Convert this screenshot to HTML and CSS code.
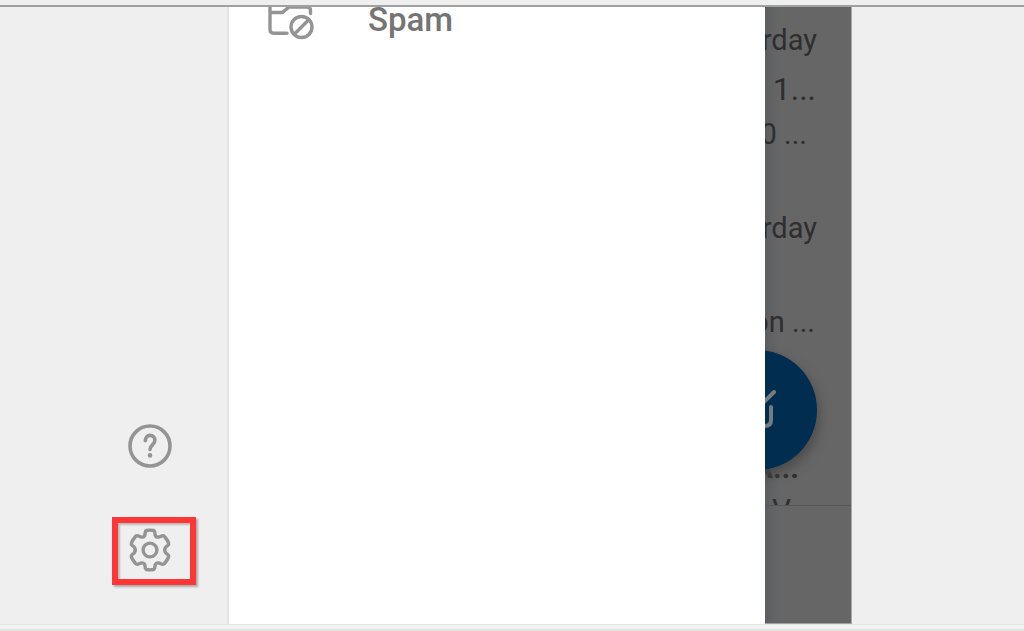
FILE: index.html
```html
<!DOCTYPE html>
<html lang="en">
<head>
<meta charset="utf-8">
<title>Mail</title>
<link rel="stylesheet" href="styles.css">
</head>
<body>
<div class="top-strip"></div>
<div class="screen">
  <nav class="rail" aria-label="Tools">
    <button class="rail-button" type="button" aria-label="Help">
      <svg width="48" height="48" viewBox="0 0 48 48" fill="none" stroke="#949494" stroke-width="3.6" stroke-linecap="round">
        <circle cx="24" cy="24" r="20"/>
        <path d="M19.3 18.8c0-3.2 2-5.400 4.800-5.400s4.800 2 4.800 4.900c0 4.400-4.900 4.700-4.900 9.200"/>
        <circle cx="24" cy="33.4" r="2.3" fill="#949494" stroke="none"/>
      </svg>
    </button>
    <button class="rail-button highlighted" type="button" aria-label="Settings">
      <svg width="48" height="48" viewBox="0 0 48 48" fill="none" stroke="#949494" stroke-width="3.400" stroke-linejoin="round">
        <circle cx="24" cy="23" r="6.900"/>
        <path d="M20.500 3.500Q24 2.700 27.500 3.500Q28.500 3.800 28.700 5L29.200 8.200Q30.200 10.500 33 10L36 8.800Q37.500 8.300 38.500 9.500Q41.200 12.500 42.600 16Q43 17.300 42 18.200L39.800 20Q37.600 23 39.800 26L42 27.800Q43 28.700 42.600 30Q41.200 33.500 38.500 36.500Q37.500 37.700 36 37.200L33 36Q30.200 35.500 29.200 37.800L28.700 41Q28.500 42.200 27.500 42.500Q24 43.300 20.500 42.500Q19.500 42.200 19.300 41L18.800 37.800Q17.800 35.500 15 36L12 37.200Q10.500 37.700 9.500 36.500Q6.800 33.500 5.400 30Q5 28.700 6 27.800L8.200 26Q10.400 23 8.200 20L6 18.200Q5 17.300 5.400 16Q6.800 12.500 9.500 9.500Q10.500 8.300 12 8.800L15 10Q17.800 10.500 18.800 8.200L19.300 5Q19.500 3.800 20.500 3.500Z"/>
      </svg>
    </button>
  </nav>
  <main class="drawer">
    <a class="folder" href="#spam">
      <svg class="folder-icon" width="48" height="48" viewBox="0 0 48 48" fill="none" stroke="#949494" stroke-width="3.400" stroke-linecap="round" stroke-linejoin="round">
        <path d="M20 40.200H6.500Q3 40.200 3 36.700V12Q3 8.500 6.500 8.500H17L23 14H40Q43.500 14 43.500 17.500V20.500M3 19.500H15.500L22 14"/>
        <circle cx="34.500" cy="34" r="10.500"/>
        <path d="M27.500 41L41.500 27"/>
      </svg>
      <span>Spam</span>
    </a>
  </main>
  <aside class="messages">
    <div class="message"><span>Yesterday</span><span class="subject">1...</span><span class="preview">0 ...</span></div>
    <div class="message"><span>Yesterday</span><span></span><span class="snippet">on ...</span></div>
    <div class="message last"><span class="sender">A...</span><span class="initial">V</span></div>
    <button class="compose" type="button" aria-label="Compose">
      <svg width="48" height="48" viewBox="0 0 48 48" fill="none" stroke="#777c80" stroke-width="4" stroke-linecap="round" stroke-linejoin="round">
        <path d="M41 6L20 27L17 33L24 30M38 21V34Q38 40 32 40H15Q9 40 9 34V16Q9 10 15 10H26"/>
      </svg>
    </button>
  </aside>
</div>
<div class="bottom-strip"></div>
</body>
</html>
```
FILE: styles.css
```css
* {
  box-sizing: border-box;
}

body {
  margin: 0;
  height: 100vh;
  display: flex;
  flex-direction: column;
  background: #efefef;
  font-family: Roboto, sans-serif;
  overflow: hidden;
}

button {
  padding: 0;
  border: 0;
  background: none;
}

svg {
  display: block;
}

.top-strip {
  flex: none;
  height: 7px;
  border-bottom: 2px solid #a0a0a0;
}

.screen {
  flex: 1;
  min-height: 0;
  display: grid;
  grid-template-columns: 229fr 536fr 87fr 172fr;
}

.rail {
  display: flex;
  flex-direction: column;
  align-items: flex-end;
  justify-content: flex-end;
  gap: 37px;
  padding: 0 31px 39px;
  border-right: 2px solid #e4e4e4;
}

.rail-button {
  width: 84px;
  height: 68px;
  display: flex;
  align-items: center;
  padding-left: 8px;
  border: 6px solid transparent;
}

.highlighted {
  border-color: #ff3636;
  box-shadow: 2px 2px 2px #aaa, inset 2px 2px 2px #bbb;
}

.drawer {
  background: #fff;
  overflow: hidden;
}

.folder {
  display: flex;
  align-items: center;
  gap: 53px;
  height: 48px;
  margin: -12px 0 0 38px;
  color: #747474;
  font-size: 33px;
  font-weight: 500;
  text-decoration: none;
}

.folder-icon {
  margin-top: -4px;
}

.messages {
  position: relative;
  overflow: hidden;
  padding-top: 10px;
  background: linear-gradient(90deg, #5b5e60, #666 14px);
  border-right: 1px solid #a9a9a9;
  border-bottom: 1px solid #a0a0a0;
  color: #2e2e2e;
  font-size: 29px;
}

.message {
  display: flex;
  flex-direction: column;
  align-items: flex-end;
  height: 188px;
  padding-right: 34px;
}

.message span {
  flex: none;
  height: 47px;
  line-height: 47px;
  white-space: nowrap;
}

.message .subject {
  padding-right: 1px;
  font-size: 32px;
  line-height: 50px;
}

.message .preview {
  padding-right: 10px;
}

.message .snippet {
  padding-right: 2px;
}

.last {
  height: 113px;
  padding-top: 51px;
  overflow: hidden;
  border-bottom: 1px solid #575757;
}

.message .sender {
  height: 44px;
  padding-right: 18px;
  font-size: 30px;
  font-weight: 700;
}

.message .initial {
  height: 44px;
  line-height: 44px;
  padding-right: 26px;
  font-size: 30px;
}

.compose {
  position: absolute;
  top: 343px;
  right: 34px;
  width: 120px;
  height: 120px;
  display: flex;
  align-items: center;
  justify-content: center;
  border-radius: 50%;
  background: #002d50;
  box-shadow: 2px 6px 12px #4a4a4a;
}

.bottom-strip {
  flex: none;
  height: 7px;
  border-top: 1px solid #e4e4e4;
  border-bottom: 2px solid #e4e4e4;
  background: #f2f2f2;
}
```
